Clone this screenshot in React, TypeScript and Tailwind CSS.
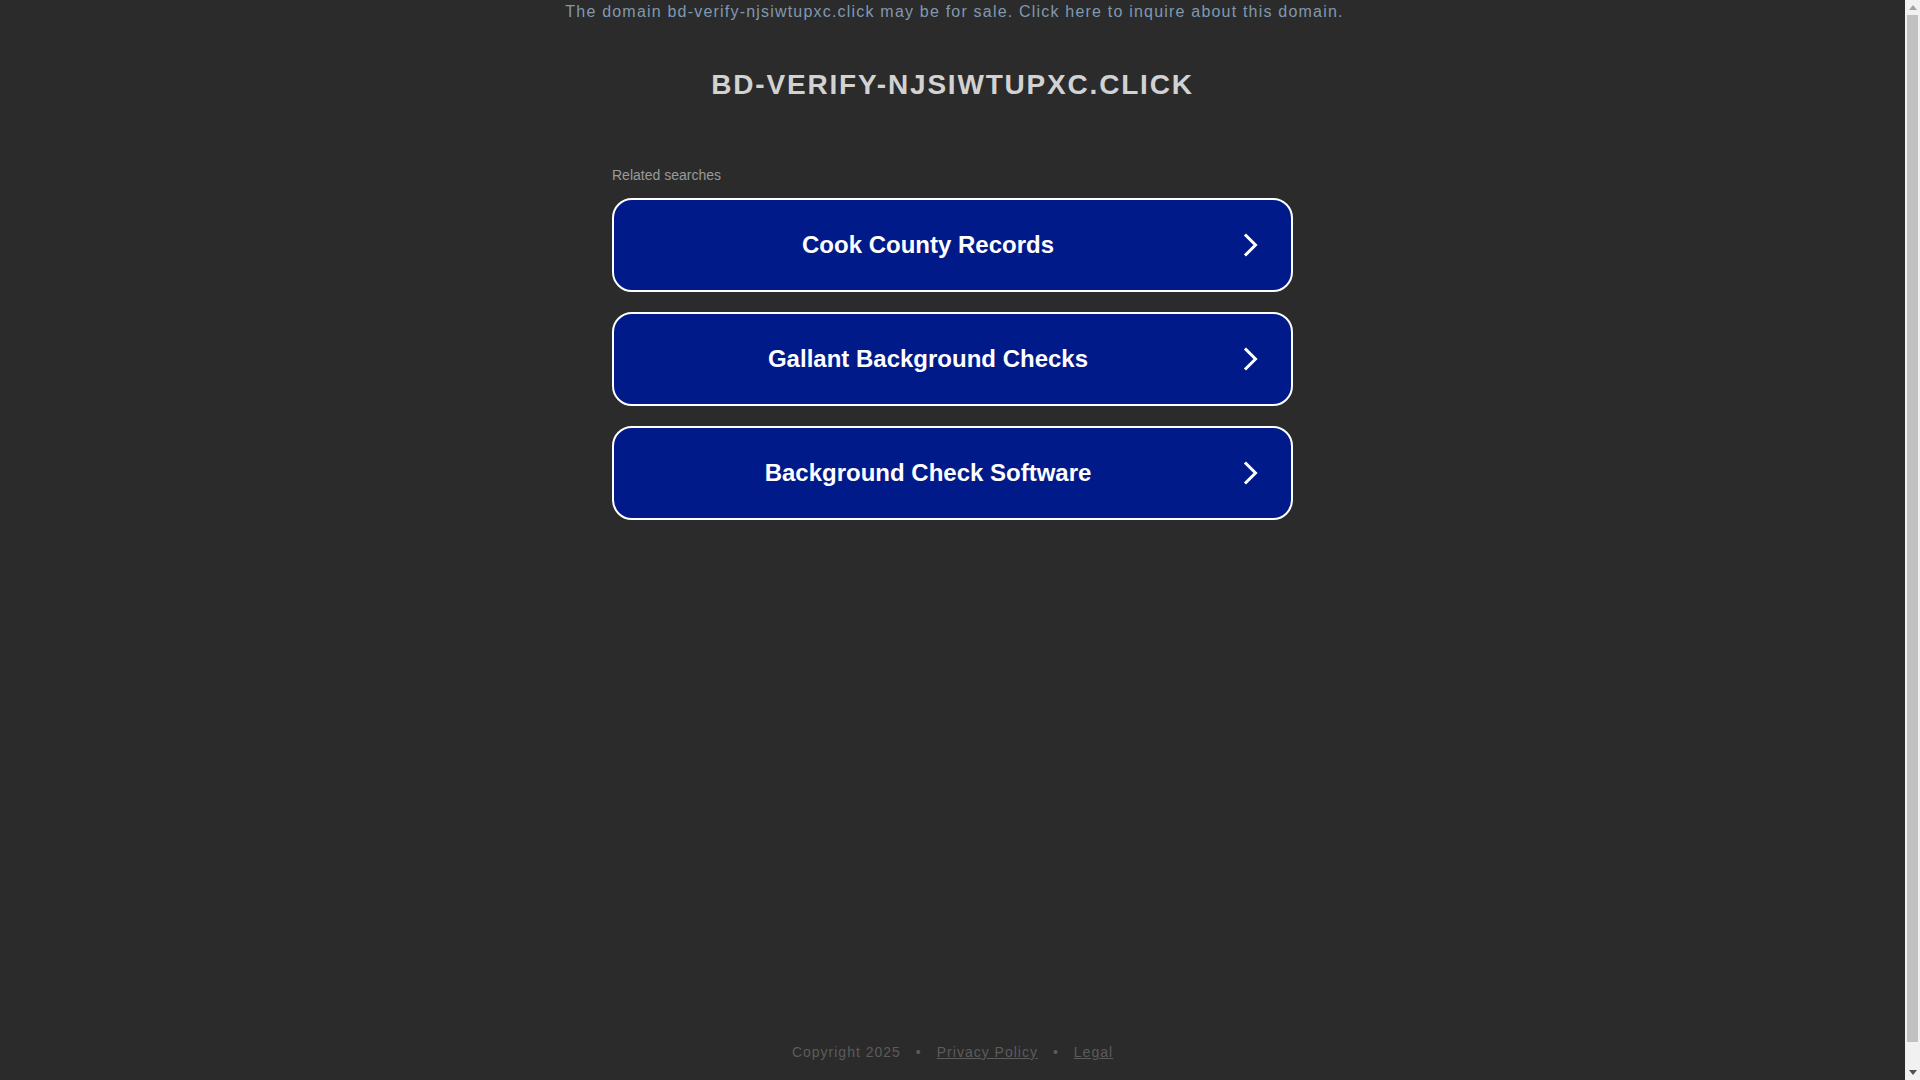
const searches = ["Cook County Records", "Gallant Background Checks", "Background Check Software"];

function Chevron() {
  return (
    <svg width="24" height="24" viewBox="0 0 24 24" fill="none" className="ml-[17px]">
      <path d="M7 2.5 L16.5 12 L7 21.5" stroke="#ffffff" strokeWidth="3" strokeLinecap="square" strokeLinejoin="miter" />
    </svg>
  );
}

// classic browser scrollbar, thumb almost filling the track
function Scrollbar() {
  return (
    <div className="flex w-[15px] flex-col bg-[#f1f1f1]">
      <div className="flex h-[15px] items-center justify-center">
        <svg width="8" height="5" viewBox="0 0 8 5"><path d="M0 5 L4 0 L8 5 Z" fill="#a3a3a3" /></svg>
      </div>
      <div className="mx-[2px] h-[1027px] bg-[#c1c1c1]" />
      <div className="flex-1" />
      <div className="flex h-[15px] items-center justify-center">
        <svg width="8" height="5" viewBox="0 0 8 5"><path d="M0 0 L8 0 L4 5 Z" fill="#505050" /></svg>
      </div>
    </div>
  );
}

export default function App() {
  return (
    <div className="flex h-[1080px] overflow-hidden bg-[#2b2b2b] font-['Liberation_Sans',Arial,sans-serif]">
      <div className="flex flex-1 flex-col">
        <p className="pt-[1px] pl-[4px] text-center text-[16px] leading-[22px] tracking-[1.2px] text-[#8099b0]">
          The domain bd-verify-njsiwtupxc.click may be for sale. Click here to inquire about this domain.
        </p>

        <h1 className="mt-[45px] text-center text-[28px] font-bold leading-[34px] tracking-[1.8px] text-[#d2d2d2]">
          BD-VERIFY-NJSIWTUPXC.CLICK
        </h1>

        <div className="mx-auto mt-[63px] w-[681px]">
          <p className="text-[14px] leading-[20px] text-[#9a9a9a]">Related searches</p>
          <div className="mt-[13px] flex flex-col gap-[20px]">
            {searches.map((s) => (
              <a
                key={s}
                href="#"
                className="flex h-[94px] items-center rounded-[20px] border-2 border-white bg-[#011a8a] pl-[20px]"
              >
                <span className="flex-1 text-center text-[24px] font-bold text-white">{s}</span>
                <span className="flex w-[69px] items-center">
                  <Chevron />
                </span>
              </a>
            ))}
          </div>
        </div>

        <div className="flex-1" />

        <footer className="pb-[18px] text-center text-[14px] leading-[20px] tracking-[1px] text-[#5c5c5c]">
          Copyright 2025
          <span className="mx-[15px]">•</span>
          <a href="#" className="underline">Privacy Policy</a>
          <span className="mx-[15px]">•</span>
          <a href="#" className="underline">Legal</a>
        </footer>
      </div>
      <Scrollbar />
    </div>
  );
}
